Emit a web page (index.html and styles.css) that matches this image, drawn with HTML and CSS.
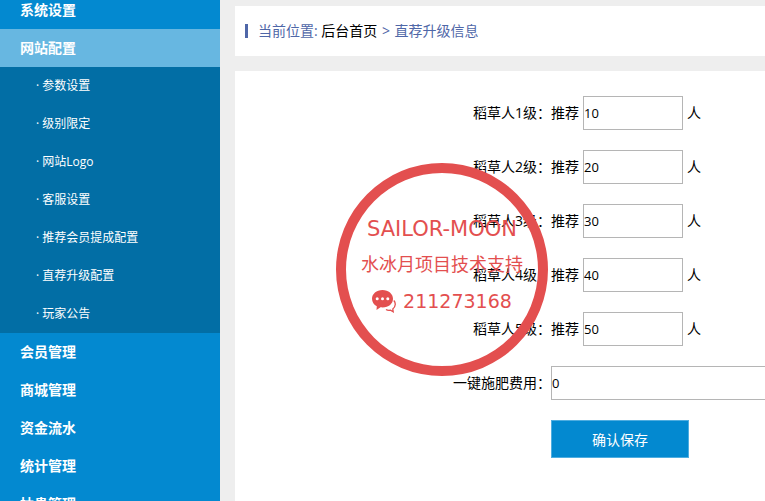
FILE: index.html
```html
<!DOCTYPE html>
<html lang="zh-CN">
<head>
  <meta charset="UTF-8" />
  <meta name="viewport" content="width=device-width, initial-scale=1.0" />
  <title>直荐升级信息</title>
  <link rel="stylesheet" href="styles.css">
</head>
<body>
  <div class="wrap">
    <nav class="sidebar">
      <ul class="menu">
        <li><a href="#">系统设置</a></li>
        <li class="open">
          <a href="#">网站配置</a>
          <ul class="submenu">
            <li><a href="#">· 参数设置</a></li>
            <li><a href="#">· 级别限定</a></li>
            <li><a href="#">· 网站Logo</a></li>
            <li><a href="#">· 客服设置</a></li>
            <li><a href="#">· 推荐会员提成配置</a></li>
            <li><a href="#">· 直荐升级配置</a></li>
            <li><a href="#">· 玩家公告</a></li>
          </ul>
        </li>
        <li><a href="#">会员管理</a></li>
        <li><a href="#">商城管理</a></li>
        <li><a href="#">资金流水</a></li>
        <li><a href="#">统计管理</a></li>
        <li><a href="#">抽贵管理</a></li>
      </ul>
    </nav>

    <main class="main">
      <div class="crumb">
        <span>当前位置: <a href="#">后台首页</a> <span class="sep">&gt;</span> 直荐升级信息</span>
      </div>

      <form class="panel">
        <div class="row">
          <label for="lv1">稻草人1级：</label>
          <div class="field">推荐 <input type="text" id="lv1" value="10"> 人</div>
        </div>
        <div class="row">
          <label for="lv2">稻草人2级：</label>
          <div class="field">推荐 <input type="text" id="lv2" value="20"> 人</div>
        </div>
        <div class="row">
          <label for="lv3">稻草人3级：</label>
          <div class="field">推荐 <input type="text" id="lv3" value="30"> 人</div>
        </div>
        <div class="row">
          <label for="lv4">稻草人4级：</label>
          <div class="field">推荐 <input type="text" id="lv4" value="40"> 人</div>
        </div>
        <div class="row">
          <label for="lv5">稻草人5级：</label>
          <div class="field">推荐 <input type="text" id="lv5" value="50"> 人</div>
        </div>
        <div class="row">
          <label for="fee">一键施肥费用：</label>
          <div class="field"><input type="text" class="wide" id="fee" value="0"></div>
        </div>
        <div class="row">
          <span class="blank"></span>
          <button type="button" class="btn-save">确认保存</button>
        </div>

        <div class="stamp">
          <div class="stamp-en">SAILOR-MOON</div>
          <div class="stamp-cn">水冰月项目技术支持</div>
          <div class="stamp-num">
            <svg width="24" height="24" viewBox="0 0 24 24">
              <path d="M14 20.5 C15.500 21.500 17 21.500 18.500 21.200 L21.200 22.800 L20.800 20 C24 17.500 23.800 13.500 21.800 11.500" fill="none" stroke="#e34f4f" stroke-width="1.300"/>
              <path d="M10.500 1 C4.500 1 0 5 0 9.700 C0 13 2 15.800 4.800 17.300 L4.500 21 L8.500 18.300 C16 19.200 21 15 21 9.700 C21 5 16.500 1 10.500 1 Z" fill="#e34f4f"/>
              <circle cx="5.200" cy="9.700" r="1.500" fill="#fff"/>
              <circle cx="10.500" cy="9.700" r="1.500" fill="#fff"/>
              <circle cx="15.800" cy="9.700" r="1.500" fill="#fff"/>
            </svg>
            <span>211273168</span>
          </div>
        </div>
      </form>
    </main>
  </div>
</body>
</html>
```

FILE: styles.css
```css
* {
  box-sizing: border-box;
}
body {
  margin: 0;
  background: #eee;
  color: #000;
  font: 14px/20px "Open Sans", "Noto Sans CJK SC", sans-serif;
}
a {
  color: inherit;
  text-decoration: none;
}
ul {
  margin: 0;
  padding: 0;
  list-style: none;
}
.wrap {
  display: flex;
  height: 100vh;
  overflow: hidden;
}
.sidebar {
  flex: 0 0 220px;
  overflow: hidden;
  background: #0389d0;
  color: #fff;
}
.menu {
  margin-top: -9px;
}
.menu a {
  display: block;
  padding-left: 20px;
  line-height: 38px;
  font-weight: bold;
}
.menu .open > a {
  background: #67b7e1;
}
.submenu {
  background: #026ea5;
}
.menu .submenu a {
  padding-left: 36px;
  font-size: 12px;
  font-weight: normal;
}
.main {
  flex: 1;
  min-width: 0;
  display: flex;
  flex-direction: column;
  gap: 15px;
  padding: 6px 0 0 15px;
}
.crumb {
  display: flex;
  align-items: center;
  height: 50px;
  padding-left: 10px;
  background: #fff;
  color: #4f67a8;
}
.crumb::before {
  content: "";
  width: 3px;
  height: 14px;
  margin-right: 10px;
  background: #4f67a8;
}
.crumb a {
  color: #000;
}
.crumb .sep {
  margin: 0 1px;
}
.panel {
  position: relative;
  flex: 1;
  display: flex;
  flex-direction: column;
  gap: 20px;
  padding-top: 25px;
  overflow: hidden;
  background: #fff;
}
.row {
  display: flex;
  align-items: center;
}
.row label,
.blank {
  flex: 0 0 316px;
  text-align: right;
}
.field {
  display: flex;
  flex: none;
  align-items: center;
  gap: 4px;
}
.field input {
  width: 100px;
  height: 34px;
  padding: 0 0 1px;
  border: 1px solid #b5b5b5;
  font: inherit;
  font-size: 13px;
}
.field .wide {
  width: 300px;
}
.btn-save {
  width: 138px;
  height: 38px;
  padding: 2px 0 0;
  border: 1px solid #4fade0;
  background: #0389d0;
  color: #fff;
  font: inherit;
}
.stamp {
  position: absolute;
  top: 92px;
  left: 101px;
  display: flex;
  flex-direction: column;
  align-items: center;
  gap: 6px;
  width: 212px;
  height: 213px;
  padding-top: 41px;
  border: 10px solid #e34f4f;
  border-radius: 50%;
  color: #e34f4f;
  font-family: "DejaVu Sans", "Noto Sans CJK SC", sans-serif;
  line-height: 30px;
  white-space: nowrap;
  pointer-events: none;
}
.stamp-en {
  font-size: 21px;
}
.stamp-cn {
  font-size: 18px;
}
.stamp-num {
  display: flex;
  align-items: center;
  gap: 7px;
  font-size: 19px;
}
```
